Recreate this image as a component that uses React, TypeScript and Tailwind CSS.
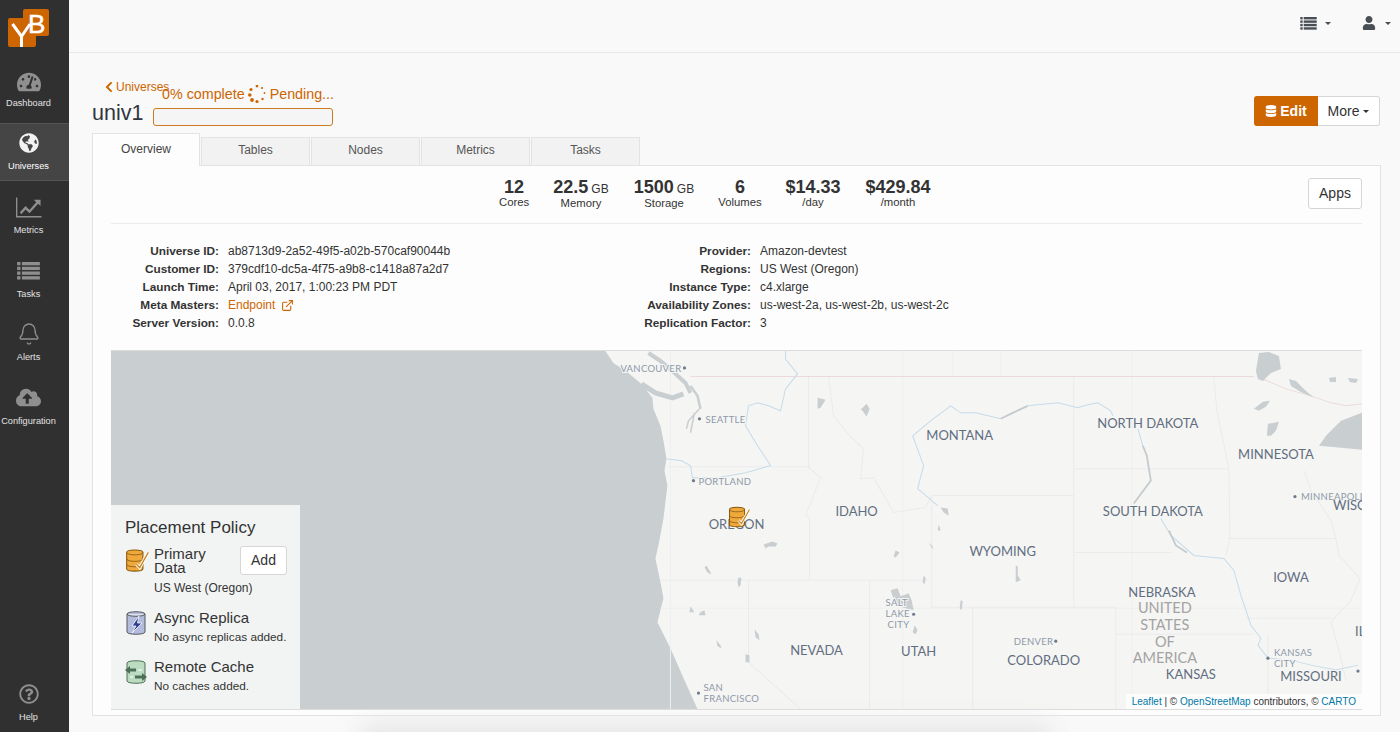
import { FaChevronLeft, FaCloudUploadAlt, FaDatabase, FaGlobeAmericas, FaRegQuestionCircle, FaTachometerAlt, FaUser } from 'react-icons/fa'
import { Bell, ExternalLink } from 'lucide-react'
import type { ReactNode } from 'react'

const orange = '#cd6500'

function ListIcon({ className }: { className?: string }) {
  return (
    <svg viewBox="0 0 24 19" className={className} fill="currentColor">
      <rect x="0" y="0" width="3.5" height="3.5" />
      <rect x="5" y="0" width="19" height="3.5" />
      <rect x="0" y="5" width="3.5" height="3.5" />
      <rect x="5" y="5" width="19" height="3.5" />
      <rect x="0" y="10" width="3.5" height="3.5" />
      <rect x="5" y="10" width="19" height="3.5" />
      <rect x="0" y="15" width="3.5" height="3.5" />
      <rect x="5" y="15" width="19" height="3.5" />
    </svg>
  )
}

function ChartIcon({ className }: { className?: string }) {
  return (
    <svg viewBox="0 0 27 21" className={className} fill="currentColor">
      <path d="M0 0h1.4v19.4H26.5V21H0z" />
      <path d="M4 15.5 10 9l4 4 7-8-2.5-2.5H25.500V9L23 6.500 14 16.500l-4-4-4.500 5z" />
    </svg>
  )
}

function Logo() {
  return (
    <svg width="50" height="48" viewBox="0 0 50 48" className="block">
      <rect x="8" y="18" width="28" height="29" rx="2" fill="#cd6500" />
      <rect x="23" y="9" width="26" height="27" rx="2" fill="#cd6500" />
      <path d="M12.500 24 21.500 36.500 30 24M21.500 36v11" fill="none" stroke="#fff" strokeWidth="3" />
      <text x="28" y="33" fill="#fff" stroke="#fff" strokeWidth="0.5" fontSize="26" fontFamily="'Liberation Sans', sans-serif">B</text>
    </svg>
  )
}

function Spinner() {
  const dots = [
    [9, 1, 1.4], [14, 3, 1.1], [16.500, 8, 0.9], [14.500, 14, 1.2], [9, 16.500, 1.6],
    [4, 15, 1.9], [1.800, 10, 1.8], [3, 4.500, 1.600],
  ]
  return (
    <svg width="18" height="18" viewBox="0 0 18 18" fill={orange}>
      {dots.map(([x, y, r]) => (
        <circle key={x + '-' + y} cx={x} cy={y} r={r} />
      ))}
    </svg>
  )
}

function NavItem({ icon, label, active, className }: { icon: ReactNode; label: string; active?: boolean; className?: string }) {
  return (
    <div
      className={`flex flex-col items-center pr-[12px] ${active ? 'h-[58px] bg-[#454545] border-y border-[#555] text-white pt-[6px]' : 'h-[63.500px] pt-[13px] text-[#e2e2e2]'} ${className ?? ''}`}
    >
      <div className={`h-[26px] flex items-center justify-center ${active ? 'text-[#f2f2f2]' : 'text-[#8f8f8f]'}`}>{icon}</div>
      <div className="text-[9.200px] leading-[12px] mt-[4px] whitespace-nowrap">{label}</div>
    </div>
  )
}

function Sidebar() {
  return (
    <div className="w-[69px] shrink-0 h-full bg-[#303030] flex flex-col">
      <div className="h-[60px]">
        <Logo />
      </div>
      <NavItem icon={<FaTachometerAlt size={24} />} label="Dashboard" className="!h-[63px] !pt-[9px] [&>div:last-child]:!mt-[2px]" />
      <NavItem active icon={<FaGlobeAmericas size={20} />} label="Universes" />
      <NavItem icon={<ChartIcon className="w-[26px] h-[21px]" />} label="Metrics" />
      <NavItem icon={<ListIcon className="w-[23px] h-[18px]" />} label="Tasks" />
      <NavItem icon={<Bell size={24} strokeWidth={1.300} />} label="Alerts" />
      <NavItem icon={<FaCloudUploadAlt size={25} />} label="Configuration" />
      <div className="flex-1" />
      <NavItem icon={<FaRegQuestionCircle size={20} />} label="Help" className="!h-[51px] !pt-0" />
    </div>
  )
}

function TopBar() {
  return (
    <div className="h-[53px] border-b border-[#e8e8e8] bg-[#f9f9f9] flex items-center justify-end text-[#4a4f55] pb-[6px]">
      <ListIcon className="w-[17px] h-[13px]" />
      <span className="ml-[8px] w-0 h-0 border-x-[3px] border-x-transparent border-t-[3px] border-t-[#4a4f55]" />
      <FaUser size={14} className="ml-[31px]" />
      <span className="ml-[9px] mr-[9px] w-0 h-0 border-x-[3px] border-x-transparent border-t-[3px] border-t-[#4a4f55]" />
    </div>
  )
}

function Header() {
  return (
    <div className="relative h-[80px] pt-[27px]">
      <div className="flex items-center pl-[11px] text-[12px] leading-[14px] text-[#cd6500]">
        <FaChevronLeft size={12} />
        <span className="ml-[1px]">Universes</span>
      </div>
      <div className="flex items-start mt-[5px]">
        <h1 className="text-[21.500px] leading-[28px] text-[#2f3640] w-[61px]">univ1</h1>
        <div className="-mt-[16px] relative">
          <div className="flex items-center pl-[9px] text-[14.300px] leading-[20px] text-[#cd6500] h-[22px]">
            <span>0% complete</span>
            <span className="mx-[3px]"><Spinner /></span>
            <span className="ml-[1px]">Pending...</span>
          </div>
          <div className="w-[180px] h-[18px] mt-[3px] border border-[#cd7a20] rounded-[3px] bg-[#f5f5f5]" />
        </div>
        <div className="ml-auto flex mr-[1px] -mt-[3px] text-[14px] h-[30px]">
          <button className="w-[64px] bg-[#cd6500] rounded-l-[3px] text-white font-bold flex items-center justify-center gap-[3px]">
            <FaDatabase size={12} />
            Edit
          </button>
          <button className="w-[62px] bg-white border border-[#d6d6d6] border-l-0 rounded-r-[3px] text-[#333] flex items-center justify-center gap-[4px]">
            More
            <span className="w-0 h-0 border-x-[3px] border-x-transparent border-t-[3px] border-t-[#333]" />
          </button>
        </div>
      </div>
    </div>
  )
}

function Tabs() {
  const tabs = ['Tables', 'Nodes', 'Metrics', 'Tasks']
  return (
    <div className="flex items-end h-[33px] text-[12px] relative z-10 -mb-px">
      <div className="w-[108px] h-[33px] bg-[#fdfdfd] border border-b-0 border-[#e3e3e3] text-[#444] flex items-center justify-center pb-[3px]">
        Overview
      </div>
      {tabs.map((t) => (
        <div key={t} className="w-[109px] ml-px h-[29px] bg-[#f2f2f2] border border-[#e3e3e3] text-[#555] flex items-center justify-center pb-[3px]">
          {t}
        </div>
      ))}
    </div>
  )
}

function Stat({ value, unit, label, className }: { value: string; unit?: string; label: string; className?: string }) {
  return (
    <div className={`text-center whitespace-nowrap ${className ?? ''}`}>
      <div className="leading-[18px] text-[#333]">
        <span className="text-[18px] font-bold">{value}</span>
        {unit && <span className="text-[12px] ml-[3px]">{unit}</span>}
      </div>
      <div className="text-[11.300px] leading-[13px] -mt-[1px] text-[#333]">{label}</div>
    </div>
  )
}

function Stats() {
  return (
    <div className="relative h-[58px] border-b border-[#ececec]">
      <div className="flex absolute left-[388px] top-[12px]">
        <Stat value="12" label="Cores" className="w-[30px]" />
        <Stat value="22.5" unit="GB" label="Memory" className="w-[56px] ml-[24px]" />
        <Stat value="1500" unit="GB" label="Storage" className="w-[62px] ml-[24px]" />
        <Stat value="6" label="Volumes" className="w-[44px] ml-[23px]" />
        <Stat value="$14.33" label="/day" className="w-[58px] ml-[22px]" />
        <Stat value="$429.84" label="/month" className="w-[68px] ml-[22px]" />
      </div>
      <button className="absolute right-0 top-[12px] w-[54px] h-[31px] bg-white border border-[#d6d6d6] rounded-[3px] text-[14px] text-[#333]">
        Apps
      </button>
    </div>
  )
}

function Row({ label, children }: { label: string; children: ReactNode }) {
  return (
    <div className="flex h-[18px] items-center whitespace-nowrap">
      <div className="w-[108px] text-right font-bold text-[11.800px] text-[#333]">{label}</div>
      <div className="ml-[9px] text-[#333]">{children}</div>
    </div>
  )
}

function Details() {
  return (
    <div className="flex pt-[18px] h-[126px] text-[12px] leading-[14px]">
      <div className="w-[532px]">
        <Row label="Universe ID:">ab8713d9-2a52-49f5-a02b-570caf90044b</Row>
        <Row label="Customer ID:">379cdf10-dc5a-4f75-a9b8-c1418a87a2d7</Row>
        <Row label="Launch Time:">April 03, 2017, 1:00:23 PM PDT</Row>
        <Row label="Meta Masters:">
          <span className="text-[#cd6500] inline-flex items-center">
            Endpoint
            <ExternalLink size={13} className="ml-[6px]" />
          </span>
        </Row>
        <Row label="Server Version:">0.0.8</Row>
      </div>
      <div>
        <Row label="Provider:">Amazon-devtest</Row>
        <Row label="Regions:">US West (Oregon)</Row>
        <Row label="Instance Type:">c4.xlarge</Row>
        <Row label="Availability Zones:">us-west-2a, us-west-2b, us-west-2c</Row>
        <Row label="Replication Factor:">3</Row>
      </div>
    </div>
  )
}

const stateLabels: [string, number, number][] = [
  ['MONTANA', 959, 439], ['IDAHO', 856, 515], ['OREGON', 736, 529], ['WYOMING', 1002, 556],
  ['NORTH DAKOTA', 1147, 427], ['SOUTH DAKOTA', 1152, 515], ['MINNESOTA', 1275, 458], ['IOWA', 1290, 582],
  ['NEBRASKA', 1161, 597], ['NEVADA', 816, 655], ['UTAH', 918, 656], ['COLORADO', 1043, 665],
  ['KANSAS', 1190, 679], ['MISSOURI', 1310, 681],
]

const cityLabels: [string, number, number][] = [
  ['VANCOUVER', 620, 371], ['SEATTLE', 705, 422], ['PORTLAND', 698, 484], ['SALT', 885, 606],
  ['LAKE', 885, 617], ['CITY', 887, 628], ['SAN', 703, 691], ['FRANCISCO', 703, 702],
  ['DENVER', 1013, 645], ['MINNEAPOLIS', 1300, 499], ['KANSAS', 1273, 656], ['CITY', 1273, 667],
]

const cityDots: [number, number][] = [
  [684, 367], [699, 418], [693, 480], [913, 614], [698, 693], [1055, 641], [1294, 496], [1267, 658], [1357, 671],
]

const usaLabels: [string, number][] = [['UNITED', 613], ['STATES', 630], ['OF', 647], ['AMERICA', 663]]

const lakes = [
  '1318 445 1325 435 1340 420 1361 412 1361 449 1340 447',
  '1257 378 1255 370 1258 352 1268 351 1278 355 1280 368 1270 372 1262 380',
  '1288 378 1295 380 1305 390 1313 397 1300 391 1290 385',
  '1253 408 1262 401 1269 400 1265 406 1258 410',
  '1267 423 1278 421 1275 430 1270 435 1266 435',
  '1328 377 1335 376 1335 381 1329 381',
  '1347 377 1357 378 1355 382 1349 381',
  '866 403 869 408 866 416 862 410 860 409',
  '817 397 825 399 820 407 817 408',
  '763 544 772 541 777 543 775 546 768 546 765 548',
  '706 565 709 570 711 574 707 572 704 567',
  '738 577 741 578 740 585 738 587 737 582',
  '940 507 947 508 948 515 943 512',
  '938 524 940 530 937 530',
  '890 590 897 588 900 596 908 593 911 600 913 610 905 608 895 605',
  '914 625 917 630 915 634 912 632',
  '754 629 758 634 759 640 755 637',
  '745 654 749 655 749 662 745 662',
  '690 606 694 612 689 612',
  '700 612 704 610 705 615 698 615',
  '716 640 720 645 721 648 717 646',
  '895 550 899 552 895 557 893 556',
  '923 575 925 578 924 584 922 582',
  '960 600 962 601 961 610 959 608',
  '928 542 932 546 932 549',
  '1015 565 1017 566 1017 575 1020 580 1015 582',
]

function MapCanvas() {
  return (
    <svg viewBox="111 350 1250 359" preserveAspectRatio="none" className="absolute inset-0 w-full h-full" fontFamily="Lato, sans-serif">
      <rect x="111" y="350" width="1250" height="359" fill="#f5f5f4" />
      {/* ocean */}
      <path
        d="M111 350H605L613 362 628 372 641 383 652 397 653 408 660 425 663 440 666 458 664 470 667 485 663 518 658 545 655 558 660 582 663 598 657 622 670 648 683 678 697 709H111Z"
        fill="#c9ced1"
      />
      {/* faint grid lines */}
      <g stroke="#efefef" strokeWidth="1" fill="none">
        <path d="M670 350V709M902 350V709M1131 350V709M952 350V375M1000 350V375" />
        <path d="M660 608H1361" />
      </g>
      {/* state lines */}
      <g stroke="#ebebeb" strokeWidth="1" fill="none">
        <path d="M667 466H810M808 376V467L820 477 805 515 809 518V580M660 580H928" />
        <path d="M748 580V662L800 709M869 580V709" />
        <path d="M828 376 833 415 849 435 863 448 860 478 873 477 893 512 925 507 931 495" />
        <path d="M931 495V607H1115V709M972 607V709M931 495H1073M1073 376V607" />
        <path d="M1074 468H1227M1074 552H1170M1115 634H1253M1267 634V709" />
        <path d="M1213 376 1216 410 1228 468 1229 538 1225 555M1227 538H1335L1338 555 1359 578 1350 600 1330 622 1338 650 1345 680M1245 618H1330" />
        <path d="M1303 470 1310 490 1330 520 1335 538" />
      </g>
      {/* canada border */}
      <path
        d="M690 375.500H1253M1262 378 1285 388 1310 395 1330 402 1345 405 1361 403"
        stroke="#ecd9dc"
        strokeWidth="1"
        fill="none"
      />
      {/* puget sound and strait */}
      <g fill="none" stroke="#c9ced1">
        <path d="M641 383 655 392 672 397 683 393" strokeWidth="5" />
        <path d="M648 352 660 360 672 370 685 382 690 392" strokeWidth="4" />
        <path d="M690 385 697 395 700 408" strokeWidth="2.500" />
        <path d="M699 408 688 420 686 428M694 412 690 432" strokeWidth="1.500" />
      </g>
      {/* rivers */}
      <g stroke="#c6dbe9" strokeWidth="1" fill="none">
        <path d="M666 458 681 460 690 465 692 477 717 477 745 472 770 465 767 460 757 445 745 425 748 405 757 402 768 405 780 410 785 388 797 373 785 358 785 350" />
        <path d="M912 435 923 465 917 488 937 505M912 435 930 420 950 405 960 412 975 412 1000 418" />
        <path d="M1027 405 1057 402 1077 407 1087 404 1097 402 1110 410 1112 415M1137 428 1142 445" />
        <path d="M1160 518 1170 535 1193 555 1223 558 1233 570 1240 595 1250 625 1260 638 1257 645 1267 658 1290 660 1310 665 1335 670 1357 665" />
      </g>
      <path d="M1000 418 1012 412 1027 405M1142 445 1146 455 1150 480 1133 503M1168 530 1175 545 1186 552" stroke="#c4cace" strokeWidth="1.800" fill="none" />
      {/* lakes */}
      <g fill="#c9ced1">
        {lakes.map((p) => (
          <polygon key={p} points={p} />
        ))}
      </g>
      {/* labels */}
      <g fill="#8e99a8" fontSize="9.500" stroke="#f5f5f4" strokeWidth="2" paintOrder="stroke">
        {cityLabels.map(([t, x, y]) => (
          <text key={t + x + y} x={x} y={y} letterSpacing="0.300">{t}</text>
        ))}
      </g>
      <g fill="#6f7b8c">
        {cityDots.map(([x, y]) => (
          <circle key={x} cx={x} cy={y} r="1.600" />
        ))}
      </g>
      <g fill="#626e80" fontSize="13" textAnchor="middle" stroke="#f5f5f4" strokeWidth="2" paintOrder="stroke">
        {stateLabels.map(([t, x, y]) => (
          <text key={t} x={x} y={y}>{t}</text>
        ))}
      </g>
      <text x="1332" y="509" fill="#626e80" fontSize="13">WISC</text>
      <text x="1354" y="636" fill="#626e80" fontSize="13">IL</text>
      <g fill="#a3a3a3" fontSize="14.500" textAnchor="middle">
        {usaLabels.map(([t, y]) => (
          <text key={t} x="1164" y={y}>{t}</text>
        ))}
      </g>
      {/* marker */}
      <g transform="translate(729 505)">
        <PrimaryDb />
      </g>
    </svg>
  )
}

function PrimaryDb() {
  return (
    <g>
      <path d="M0 4C0 1 15 1 15 4V19C15 22 0 22 0 19Z" fill="#efa93b" stroke="#8a5a10" strokeWidth="1" />
      <path d="M0 4C0 7 15 7 15 4M0 10C0 13 15 13 15 10M0 15C0 18 15 18 15 15" fill="none" stroke="#8a5a10" strokeWidth="0.800" />
      <path d="M9 15 12 18 20 4" fill="none" stroke="#fff" strokeWidth="3" />
      <path d="M9 15 12 18 20 4" fill="none" stroke="#c8861e" strokeWidth="1.200" />
    </g>
  )
}

function ReplicaIcon() {
  return (
    <svg width="22" height="26" viewBox="0 0 22 26" className="shrink-0">
      <path d="M2 4C2 1 20 1 20 4V22C20 25 2 25 2 22Z" fill="#b3bcdc" stroke="#55585f" strokeWidth="1" />
      <path d="M2 4C2 7 20 7 20 4" fill="#dfe3ee" stroke="#55585f" strokeWidth="1" />
      <path d="M14 6 7 16H11L7 23 17 13H12.500Z" fill="#2f3f8f" stroke="#fff" strokeWidth="0.800" />
    </svg>
  )
}

function CacheIcon() {
  return (
    <svg width="22" height="26" viewBox="0 0 22 26" className="shrink-0">
      <path d="M2 4C2 1 20 1 20 4V22C20 25 2 25 2 22Z" fill="#bcdcc2" stroke="#4d6e57" strokeWidth="1" />
      <path d="M0 11 5 7V9.500H11V12.500H5V15Z" fill="#4d6e57" />
      <path d="M22 18 17 14V16.500H10V19.500H17V22Z" fill="#4d6e57" />
      <path d="M5 18H8M13 11H17" stroke="#fff" strokeWidth="1.200" />
    </svg>
  )
}

function PlacementPolicy() {
  return (
    <div className="absolute left-0 bottom-0 w-[189px] h-[204px] bg-[#f2f4f4] pl-[14px] pr-[13px] pt-[14px] text-[#333]">
      <div className="text-[17px] leading-[18px] -mb-[0px]">Placement Policy</div>
      <div className="flex mt-[9px]">
        <svg width="25" height="26" viewBox="-1 -1 22 24" className="shrink-0 mt-[1px]">
          <PrimaryDb />
        </svg>
        <div className="ml-[4px] w-[70px] text-[15px] leading-[14px] mt-[1px]">Primary Data</div>
        <button className="ml-auto w-[47px] h-[29px] bg-white border border-[#d6d6d6] rounded-[3px] text-[14px]">Add</button>
      </div>
      <div className="text-[12px] leading-[14px] ml-[29px] mt-[6px]">US West (Oregon)</div>
      <div className="flex mt-[15px]">
        <ReplicaIcon />
        <div className="ml-[7px]">
          <div className="text-[15px] leading-[16px]">Async Replica</div>
          <div className="text-[11.800px] leading-[14px] mt-[4px] whitespace-nowrap">No async replicas added.</div>
        </div>
      </div>
      <div className="flex mt-[15px]">
        <CacheIcon />
        <div className="ml-[7px]">
          <div className="text-[15px] leading-[16px]">Remote Cache</div>
          <div className="text-[11.800px] leading-[14px] mt-[4px]">No caches added.</div>
        </div>
      </div>
    </div>
  )
}

function Attribution() {
  return (
    <div className="absolute right-0 bottom-0 h-[15px] px-[6px] bg-white/80 text-[10px] leading-[15px] text-[#333] whitespace-nowrap">
      <span className="text-[#0078a8]">Leaflet</span> | © <span className="text-[#0078a8]">OpenStreetMap</span> contributors, ©{' '}
      <span className="text-[#0078a8]">CARTO</span>
    </div>
  )
}

export default function App() {
  return (
    <div className="flex w-[1400px] h-[732px] overflow-hidden bg-[#f9f9f9] font-['Liberation_Sans',Arial,sans-serif]">
      <Sidebar />
      <div className="flex-1 min-w-0">
        <TopBar />
        <div className="pl-[23px] pr-[19px]">
          <Header />
          <Tabs />
          <div className="h-[551px] border border-[#e3e3e3] bg-[#fdfdfd] px-[18px]">
            <Stats />
            <Details />
            <div className="relative h-[360px] border-t border-b border-[#dcdcdc] overflow-hidden">
              <MapCanvas />
              <PlacementPolicy />
              <Attribution />
            </div>
          </div>
          {/* soft shadow under the card */}
          <div className="mt-[8px] ml-[270px] w-[690px] h-[40px] bg-[#e6e6e6] blur-[12px]" />
        </div>
      </div>
    </div>
  )
}
